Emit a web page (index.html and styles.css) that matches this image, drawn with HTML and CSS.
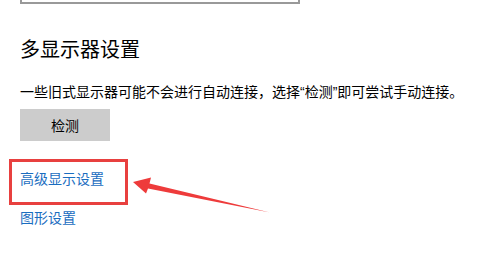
FILE: index.html
```html
<!DOCTYPE html>
<html lang="zh-CN">
<head>
    <meta charset="UTF-8">
    <meta name="viewport" content="width=device-width, initial-scale=1.0">
    <title>多显示器设置</title>
    <link rel="stylesheet" href="styles.css">
</head>
<body>
    <div class="page">
        <div class="top-box"></div>
        <h2 class="section-title">多显示器设置</h2>
        <p class="desc">一些旧式显示器可能不会进行自动连接，选择“检测”即可尝试手动连接。</p>
        <button class="btn-detect">检测</button>
        <a class="link link-advanced" href="#">高级显示设置</a>
        <a class="link link-graphics" href="#">图形设置</a>

        <svg class="annotation" width="482" height="261" viewBox="0 0 482 261">
            <rect x="10.5" y="160.5" width="116" height="43" fill="none" stroke="#e8403f" stroke-width="3"/>
            <polygon points="133,182 151,177.5 149.5,183.5 270,212.5 148,188.5 146,193.5" fill="#ee3b3b"/>
        </svg>
    </div>
</body>
</html>
```

FILE: styles.css
```css
body {
    margin: 0;
    background-color: #fff;
    font-family: "Liberation Sans", "Noto Sans CJK SC", sans-serif;
    color: #000;
}

.page {
    position: relative;
    width: 482px;
    height: 261px;
    padding-left: 20px;
    box-sizing: border-box;
    overflow: hidden;
}

.top-box {
    width: 276px;
    height: 2px;
    border: 2px solid #999;
    border-top: none;
}

.section-title {
    font-size: 20px;
    font-weight: normal;
    line-height: 20px;
    margin: 36px 0 0 0;
}

.desc {
    font-size: 14px;
    line-height: 14px;
    margin: 25px 0 0 0;
    white-space: nowrap;
}

.btn-detect {
    display: block;
    width: 90px;
    height: 32px;
    margin-top: 10px;
    padding: 0;
    border: none;
    background-color: #cccccc;
    font-family: inherit;
    font-size: 14px;
    color: #000;
}

.link {
    display: block;
    width: max-content;
    font-size: 14px;
    line-height: 14px;
    color: #1a6dbf;
    text-decoration: none;
}

.link-advanced {
    margin-top: 31px;
}

.link-graphics {
    margin-top: 25px;
}

.annotation {
    position: absolute;
    left: 0;
    top: 0;
    pointer-events: none;
}
```
